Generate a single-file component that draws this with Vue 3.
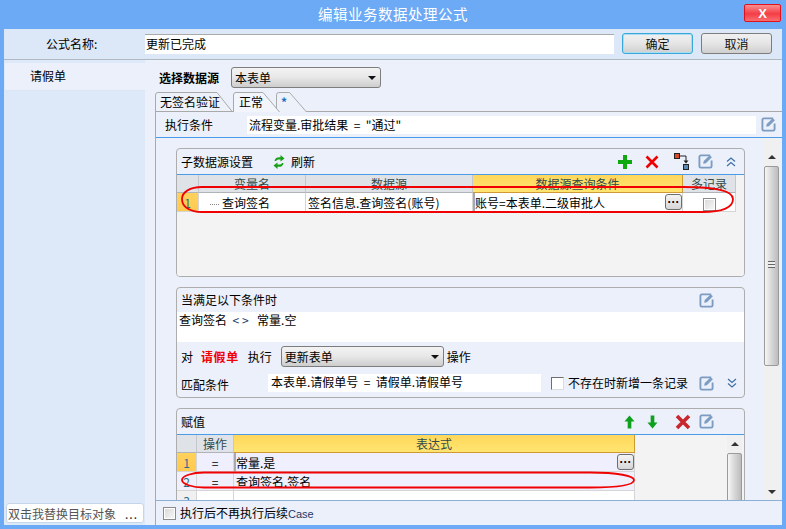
<script setup>
const editPath = 'M13 1.5H3A1.5 1.5 0 0 0 1.5 3v10A1.5 1.5 0 0 0 3 14.500h10a1.500 1.500 0 0 0 1.500-1.500V7'
</script>

<template>
  <div class="window">
    <header class="titlebar">
      <span class="title">编辑业务数据处理公式</span>
      <button class="close">X</button>
    </header>

    <div class="toprow">
      <label class="name-label">公式名称:</label>
      <div class="name-input">更新已完成</div>
      <button class="btn primary">确定</button>
      <button class="btn">取消</button>
    </div>

    <div class="body">
      <aside class="sidebar">
        <div class="side-item">请假单</div>
        <div class="side-input"><span>双击我替换目标对象</span><span class="dots">...</span></div>
      </aside>

      <main class="main">
        <div class="source-row">
          <strong class="source-label">选择数据源</strong>
          <div class="select source-select">本表单<i class="caret"></i></div>
        </div>

        <div class="tabs">
          <div class="tab tab1">
            <svg class="tab-shape" viewBox="0 0 78 20" preserveAspectRatio="none"><path d="M.5 20V3Q.5 .5 3 .5H62L77.500 20" fill="#edf1fa" stroke="#a9a9a9"/></svg>
            <span>无签名验证</span>
          </div>
          <div class="tab tab2">
            <svg class="tab-shape" viewBox="0 0 47 20" preserveAspectRatio="none"><path d="M.5 20V3Q.5 .5 3 .5H30L46.500 20" fill="#f2f5fc" stroke="#a9a9a9"/></svg>
            <span>正常</span>
          </div>
          <div class="tab tab3">
            <svg class="tab-shape" viewBox="0 0 32 20" preserveAspectRatio="none"><path d="M.5 20V3Q.5 .5 3 .5H14L31.500 20" fill="#edf1fa" stroke="#a9a9a9"/></svg>
            <span>*</span>
          </div>
        </div>

        <div class="content">
          <div class="exec-row">
            <span class="exec-label">执行条件</span>
            <div class="exec-input">流程变量.审批结果 &nbsp;= &nbsp;"通过"</div>
            <svg class="edit" viewBox="0 0 16 16"><path :d="editPath" fill="none" stroke="#7d9cc2" stroke-width="2"/><path d="M5.500 10.500l.6-3L12.500 1.200l2.300 2.300-6.400 6.300z" fill="#7d9cc2"/></svg>
          </div>

          <div class="scroller">
            <div class="panels">
              <section class="panel p1">
                <div class="p-head">
                  <span>子数据源设置</span>
                  <svg class="refresh" viewBox="0 0 12 14"><path d="M1.500 6C2 3 4 1.800 7.500 2.200V0L11.500 3.500 7.500 6.500V4.500C5 4.200 3.500 4.700 3 6z" fill="#18a018"/><path d="M10.500 8C10 11 8 12.200 4.500 11.800V14L.5 10.500 4.500 7.500V9.500C7 9.800 8.500 9.300 9 8z" fill="#18a018"/></svg>
                  <span class="refresh-text">刷新</span>
                  <span class="spacer"></span>
                  <svg class="ic plus" viewBox="0 0 14 14"><path d="M5 0h4v5h5v4H9v5H5V9H0V5h5z" fill="#0fa80f"/></svg>
                  <svg class="ic cross" viewBox="0 0 14 14"><path d="M1.500 1.500l11 11M12.500 1.500l-11 11" stroke="#f00000" stroke-width="2.600"/></svg>
                  <svg class="ic link" viewBox="0 0 16 18"><rect x=".5" y=".5" width="5" height="5" fill="#d84a2c" stroke="#222"/><rect x="9.500" y="11.500" width="5" height="5" fill="#5b8bb5" stroke="#222"/><path d="M6 3h6v5" fill="none" stroke="#222"/><path d="M9.500 7.500h5L12 10.500z" fill="#222"/></svg>
                  <svg class="edit" viewBox="0 0 16 16"><path :d="editPath" fill="none" stroke="#7d9cc2" stroke-width="2"/><path d="M5.500 10.500l.6-3L12.500 1.200l2.300 2.300-6.400 6.300z" fill="#7d9cc2"/></svg>
                  <svg class="chev" viewBox="0 0 10 10"><path d="M1 4.500l4-3.500 4 3.500M1 9l4-3.500L9 9" fill="none" stroke="#3f6fa5" stroke-width="1.200"/></svg>
                </div>
                <div class="grid-area">
                  <div class="grid g1">
                    <div class="gh"></div>
                    <div class="gh">变量名</div>
                    <div class="gh">数据源</div>
                    <div class="gh sel">数据源查询条件</div>
                    <div class="gh">多记录</div>
                    <div class="rh sel">1</div>
                    <div class="gc tree-cell"><span class="tree"></span>查询签名</div>
                    <div class="gc">签名信息.查询签名(账号)</div>
                    <div class="gc active">账号=本表单.二级审批人<button class="more">···</button></div>
                    <div class="gc center"><i class="check soft"></i></div>
                  </div>
                </div>
              </section>

              <section class="panel p2">
                <div class="p-head short">
                  <span>当满足以下条件时</span>
                  <span class="spacer"></span>
                  <svg class="edit e2" viewBox="0 0 16 16"><path :d="editPath" fill="none" stroke="#7d9cc2" stroke-width="2"/><path d="M5.500 10.500l.6-3L12.500 1.200l2.300 2.300-6.400 6.300z" fill="#7d9cc2"/></svg>
                </div>
                <div class="cond">查询签名 &nbsp;<span class="op">&lt;&gt;</span> &nbsp;常量.空</div>
                <div class="action-row">
                  <span>对</span>
                  <strong class="target">请假单</strong>
                  <span>执行</span>
                  <div class="select act-select">更新表单<i class="caret"></i></div>
                  <span>操作</span>
                </div>
                <div class="match-row">
                  <span class="match-label">匹配条件</span>
                  <div class="match-input">本表单.请假单号 &nbsp;= &nbsp;请假单.请假单号</div>
                  <i class="check plain"></i>
                  <span class="match-check">不存在时新增一条记录</span>
                  <svg class="edit" viewBox="0 0 16 16"><path :d="editPath" fill="none" stroke="#7d9cc2" stroke-width="2"/><path d="M5.500 10.500l.6-3L12.500 1.200l2.300 2.300-6.400 6.300z" fill="#7d9cc2"/></svg>
                  <svg class="chev" viewBox="0 0 10 10"><path d="M1 1l4 3.500L9 1M1 5.500L5 9l4-3.500" fill="none" stroke="#3f6fa5" stroke-width="1.200"/></svg>
                </div>
              </section>

              <section class="panel p3">
                <div class="p-head">
                  <span>赋值</span>
                  <span class="spacer"></span>
                  <svg class="ic arrow" viewBox="0 0 12 14"><path d="M6 0l5.500 6.500H8V14H4V6.500H.5z" fill="#0fa020"/></svg>
                  <svg class="ic arrow a2" viewBox="0 0 12 14"><path d="M6 14L.5 7.500H4V0h4v7.500h3.500z" fill="#0fa020"/></svg>
                  <svg class="ic cross2" viewBox="0 0 16 16"><path d="M2 2l12 12M14 2L2 14" stroke="#c8282c" stroke-width="3.600"/></svg>
                  <svg class="edit" viewBox="0 0 16 16"><path :d="editPath" fill="none" stroke="#7d9cc2" stroke-width="2"/><path d="M5.500 10.500l.6-3L12.500 1.200l2.300 2.300-6.400 6.300z" fill="#7d9cc2"/></svg>
                  <span class="p3-end"></span>
                </div>
                <div class="grid-area with-bar">
                  <div class="grid g3">
                    <div class="gh"></div>
                    <div class="gh">操作</div>
                    <div class="gh sel">表达式</div>
                    <div class="rh sel">1</div>
                    <div class="gc center tint">=</div>
                    <div class="gc active tint">常量.是<button class="more">···</button></div>
                    <div class="rh lav">2</div>
                    <div class="gc center tint">=</div>
                    <div class="gc tint">查询签名.签名</div>
                    <div class="rh">3</div>
                    <div class="gc"></div>
                    <div class="gc"></div>
                  </div>
                  <div class="vbar inner">
                    <div class="vbtn"><i class="up"></i></div>
                    <div class="thumb"></div>
                  </div>
                </div>
              </section>
            </div>

            <div class="vbar outer">
              <div class="vbtn"><i class="up"></i></div>
              <div class="thumb"><i class="grip"></i></div>
              <div class="vtrack"></div>
              <div class="vbtn low"><i class="down"></i></div>
            </div>
          </div>

          <div class="bottom-bar">
            <i class="check soft"></i>
            <span>执行后不再执行后续<span class="latin">Case</span></span>
          </div>
        </div>
      </main>
    </div>

    <svg class="ovals" viewBox="0 0 786 529">
      <path d="M202 187H683C716 187 733 191 733 199C733 208 722 212 702 212H202C190 212 182 207 182 199C182 192 190 187 202 187Z"/>
      <path d="M204 472.500H590C618 472.500 634 476 634 480C634 485 618 487.500 590 487.500H204C192 487.500 182 484 182 480C182 476 192 472.500 204 472.500Z"/>
    </svg>
  </div>
</template>

<style scoped>
* { box-sizing: border-box; }
.window {
  position: relative;
  width: 786px;
  height: 529px;
  overflow: hidden;
  display: flex;
  flex-direction: column;
  padding: 0 4px 4px;
  background: #6caaf5;
  color: #000;
  font: 12px/16px "Noto Sans CJK SC", "Liberation Sans", sans-serif;
}
.titlebar {
  position: relative;
  height: 29px;
  flex: none;
  display: flex;
  align-items: center;
  justify-content: center;
}
.title { color: #fff; font-size: 14.500px; letter-spacing: .5px; margin-top: -2px; }
.close {
  position: absolute;
  right: 1px;
  top: 4px;
  width: 37px;
  height: 18px;
  padding: 0;
  border: 1px solid #e0101c;
  border-radius: 2px;
  background: linear-gradient(#fb8f8f, #f43d46 55%, #f96e6e);
  color: #fff;
  font: bold 13px/15px "Liberation Sans", sans-serif;
}
.toprow {
  flex: none;
  height: 31px;
  display: flex;
  align-items: center;
  background: #dce8f7;
  border-bottom: 1px solid #b0b8c2;
  padding-bottom: 1px;
}
.name-label { width: 141px; padding-left: 42px; }
.name-input {
  width: 469px;
  height: 20px;
  padding-left: 1px;
  line-height: 18px;
  background: #fff;
  border-top: 1px solid #aaa;
}
.btn {
  width: 71px;
  height: 21px;
  margin-left: 8px;
  padding: 0;
  border: 1px solid #7d7d7d;
  border-radius: 3px;
  background: linear-gradient(#f0f0f0, #e6e6e6 48%, #cfcfcf);
  color: #111;
  font: inherit;
}
.primary { border-color: #38a8dc; box-shadow: inset 0 0 0 1px #a8dcf0; }
.body { flex: 1; min-height: 0; display: flex; }
.sidebar {
  width: 141px;
  flex: none;
  display: flex;
  flex-direction: column;
  justify-content: space-between;
  padding: 3px 0 2px 2px;
  background: #dde9f8;
}
.side-item {
  height: 28px;
  margin-left: -1px;
  padding-left: 25px;
  line-height: 26px;
  background: #ebf0fa;
  border-bottom: 1px solid #dbe6f4;
}
.side-input {
  width: 138px;
  height: 20px;
  display: flex;
  justify-content: space-between;
  padding: 0 5px 0 1px;
  line-height: 19px;
  color: #555;
  background: #fff;
  border: 1px solid #c6d6ea;
  border-radius: 3px;
}
.dots { color: #222; letter-spacing: 1px; }
.main {
  flex: 1;
  min-width: 0;
  display: flex;
  flex-direction: column;
  padding-left: 10px;
  background: #ebf0fa;
}
.source-row { flex: none; height: 32px; display: flex; align-items: center; padding: 3px 0 0 4px; }
.source-label { width: 72px; font-weight: 700; }
.select {
  position: relative;
  height: 21px;
  padding-left: 3px;
  line-height: 19px;
  border: 1px solid #7d7d7d;
  border-radius: 3px;
  background: linear-gradient(#f3f3f3, #e8e8e8 48%, #cdcdcd);
}
.source-select { width: 150px; }
.caret {
  position: absolute;
  right: 4px;
  top: 8px;
  border: 4px solid transparent;
  border-top: 4px solid #111;
  border-bottom: 0;
}
.tabs { flex: none; height: 19px; display: flex; position: relative; }
.tab { position: relative; height: 20px; padding-left: 5px; line-height: 20px; }
.tab span { position: relative; }
.tab-shape { position: absolute; left: 0; top: 0; width: 100%; height: 100%; }
.tab1 { width: 78px; }
.tab2 { width: 47px; padding-left: 6px; z-index: 2; }
.tab3 { width: 31px; margin-left: -4px; padding-left: 5px; color: #1a6fc0; font-weight: 700; z-index: 1; }
.content {
  flex: 1;
  min-height: 0;
  position: relative;
  display: flex;
  flex-direction: column;
  border-left: 1px solid #a9a9a9;
  border-top: 1px solid #a9a9a9;
}
.exec-row {
  flex: none;
  height: 26px;
  display: flex;
  align-items: center;
  padding-left: 9px;
  border-bottom: 1px solid #4a9be8;
}
.exec-label { width: 82px; }
.exec-input {
  width: 509px;
  height: 18px;
  padding-left: 2px;
  line-height: 17px;
  background: #fff;
}
.edit { width: 15px; height: 15px; flex: none; }
.exec-row .edit { margin-left: 5px; }
.scroller { flex: 1; min-height: 0; display: flex; overflow: hidden; }
.panels {
  width: 609px;
  flex: none;
  display: flex;
  flex-direction: column;
  gap: 10px;
  padding: 10px 0 0 20px;
}
.panel {
  flex: none;
  width: 569px;
  border: 1px solid #adadad;
  border-radius: 4px;
  overflow: hidden;
}
.p1 { height: 129px; }
.p2 { height: 111px; }
.p3 { height: 150px; }
.p-head {
  height: 25px;
  display: flex;
  align-items: center;
  padding-left: 4px;
}
.refresh { width: 12px; height: 14px; margin-left: 20px; }
.refresh-text { margin-left: 6px; }
.spacer { flex: 1; }
.ic { flex: none; }
.plus { width: 14px; height: 14px; margin-right: 13px; }
.cross { width: 14px; height: 14px; margin-right: 15px; }
.link { width: 16px; height: 18px; margin-right: 8px; }
.p1 .edit { margin-right: 13px; }
.chev { width: 10px; height: 10px; flex: none; margin-right: 8px; }
.grid-area {
  height: 102px;
  background: #f3f3f3;
  border-top: 1px solid #4a9be8;
}
.grid { display: grid; }
.g1 { width: 559px; grid-template-columns: 22px 107px 167px 210px 53px; grid-template-rows: 18px 19px; }
.gh {
  text-align: center;
  line-height: 17px;
  color: #2f4a4a;
  background: #dfe3e8;
  border-right: 1px solid #c4c8cc;
  border-bottom: 1px solid #b0b4b8;
}
.gh.sel { background: linear-gradient(#ffd75c, #ffe570); border-color: #cf9a35; }
.rh {
  text-align: center;
  line-height: 19px;
  color: #2e6a8a;
  background: #f0f0f0;
  border-right: 1px solid #d5d5d5;
  border-bottom: 1px solid #d5d5d5;
}
.rh.sel { background: linear-gradient(#ffd25c, #ffc950); }
.rh.lav { background: #f0effd; }
.gc {
  position: relative;
  min-width: 0;
  padding-left: 2px;
  line-height: 19px;
  white-space: nowrap;
  background: #fff;
  border-right: 1px solid #d5d5d5;
  border-bottom: 1px solid #d5d5d5;
}
.center { text-align: center; padding-left: 0; }
.active { border-left: 2px solid #a8a8b0; padding-left: 0; }
.tint { background: #f0effd; }
.tree-cell { padding-left: 11px; }
.tree {
  display: inline-block;
  width: 9px;
  margin-right: 3px;
  vertical-align: 3px;
  border-top: 1px dotted #888;
}
.more {
  position: absolute;
  right: 0;
  top: 1px;
  width: 17px;
  height: 16px;
  padding: 0;
  border: 1px solid #6d6d6d;
  border-radius: 3px;
  background: linear-gradient(#f4f4f4, #d6d6d6);
  color: #000;
  font: bold 12px/12px "Liberation Sans", sans-serif;
}
.check {
  display: inline-block;
  flex: none;
  width: 13px;
  height: 13px;
  vertical-align: middle;
  border: 1px solid #8a8a8a;
  background: #fff;
}
.soft { background: linear-gradient(135deg, #d8d8d8, #f8f8f8); box-shadow: inset 0 0 0 1px #fff; }
.plain { border-color: #6e6e6e #ddd #ddd #6e6e6e; }
.short { height: 24px; }
.e2 { margin-right: 30px; }
.cond { height: 30px; padding-left: 2px; line-height: 16px; background: #fff; }
.op { letter-spacing: 3px; color: #1a3a6a; }
.action-row {
  height: 23px;
  margin-top: 3px;
  display: flex;
  align-items: center;
  gap: 8px;
  padding-left: 4px;
}
.target { color: #f00000; font-weight: 700; letter-spacing: .6px; margin-right: 1px; }
.act-select { width: 163px; margin: 0 -5px 0 1px; }
.match-row { height: 24px; display: flex; align-items: center; padding: 6px 0 0 4px; }
.match-label { width: 87px; flex: none; margin-top: 3px; }
.match-input { width: 273px; height: 18px; padding-left: 3px; line-height: 15px; background: #fff; flex: none; }
.match-row .check { margin-left: 10px; }
.match-check { margin-left: 4px; width: 120px; flex: none; white-space: nowrap; }
.match-row .edit { margin-left: 11px; margin-right: 13px; }
.arrow { width: 11px; height: 14px; margin-right: 12px; }
.a2 { margin-right: 17px; }
.cross2 { width: 16px; height: 16px; margin-right: 8px; }
.p3-end { width: 30px; flex: none; }
.with-bar { height: 120px; display: flex; }
.g3 { width: 549px; flex: none; grid-template-columns: 20px 37px 401px; grid-template-rows: 18px 19px 19px 19px; align-self: flex-start; }
.vbar { display: flex; flex-direction: column; width: 15px; flex: none; background: #f0f0f0; }
.inner { margin-left: 1px; }
.vbtn { height: 18px; flex: none; display: flex; align-items: center; justify-content: center; }
.up, .down { width: 0; height: 0; border: 4px solid transparent; border-top: 0; border-bottom: 4px solid #333; }
.down { border-bottom: 0; border-top: 4px solid #333; }
.thumb {
  position: relative;
  flex: none;
  height: 200px;
  border: 1px solid #9a9a9a;
  border-radius: 2px;
  background: linear-gradient(90deg, #f6f6f6, #dadada 45%, #bcbcbc);
}
.grip {
  position: absolute;
  left: 3px;
  right: 3px;
  top: 94px;
  height: 7px;
  background: repeating-linear-gradient(#666 0 1px, #eee 1px 3px);
}
.outer { margin-left: -1px; padding-top: 10px; }
.vtrack { flex: 1; }
.vbtn.low { height: 17px; }
.bottom-bar {
  flex: none;
  height: 25px;
  display: flex;
  align-items: center;
  gap: 4px;
  padding-left: 7px;
  border-top: 1px solid #8ab0d8;
  background: #ebf0fa;
}
.latin { font-size: 11px; font-family: "Liberation Sans", sans-serif; color: #1a3a6a; }
.ovals {
  position: absolute;
  left: 0;
  top: 0;
  width: 786px;
  height: 529px;
  pointer-events: none;
  fill: none;
  stroke: #f00000;
  stroke-width: 1.800;
}
</style>
